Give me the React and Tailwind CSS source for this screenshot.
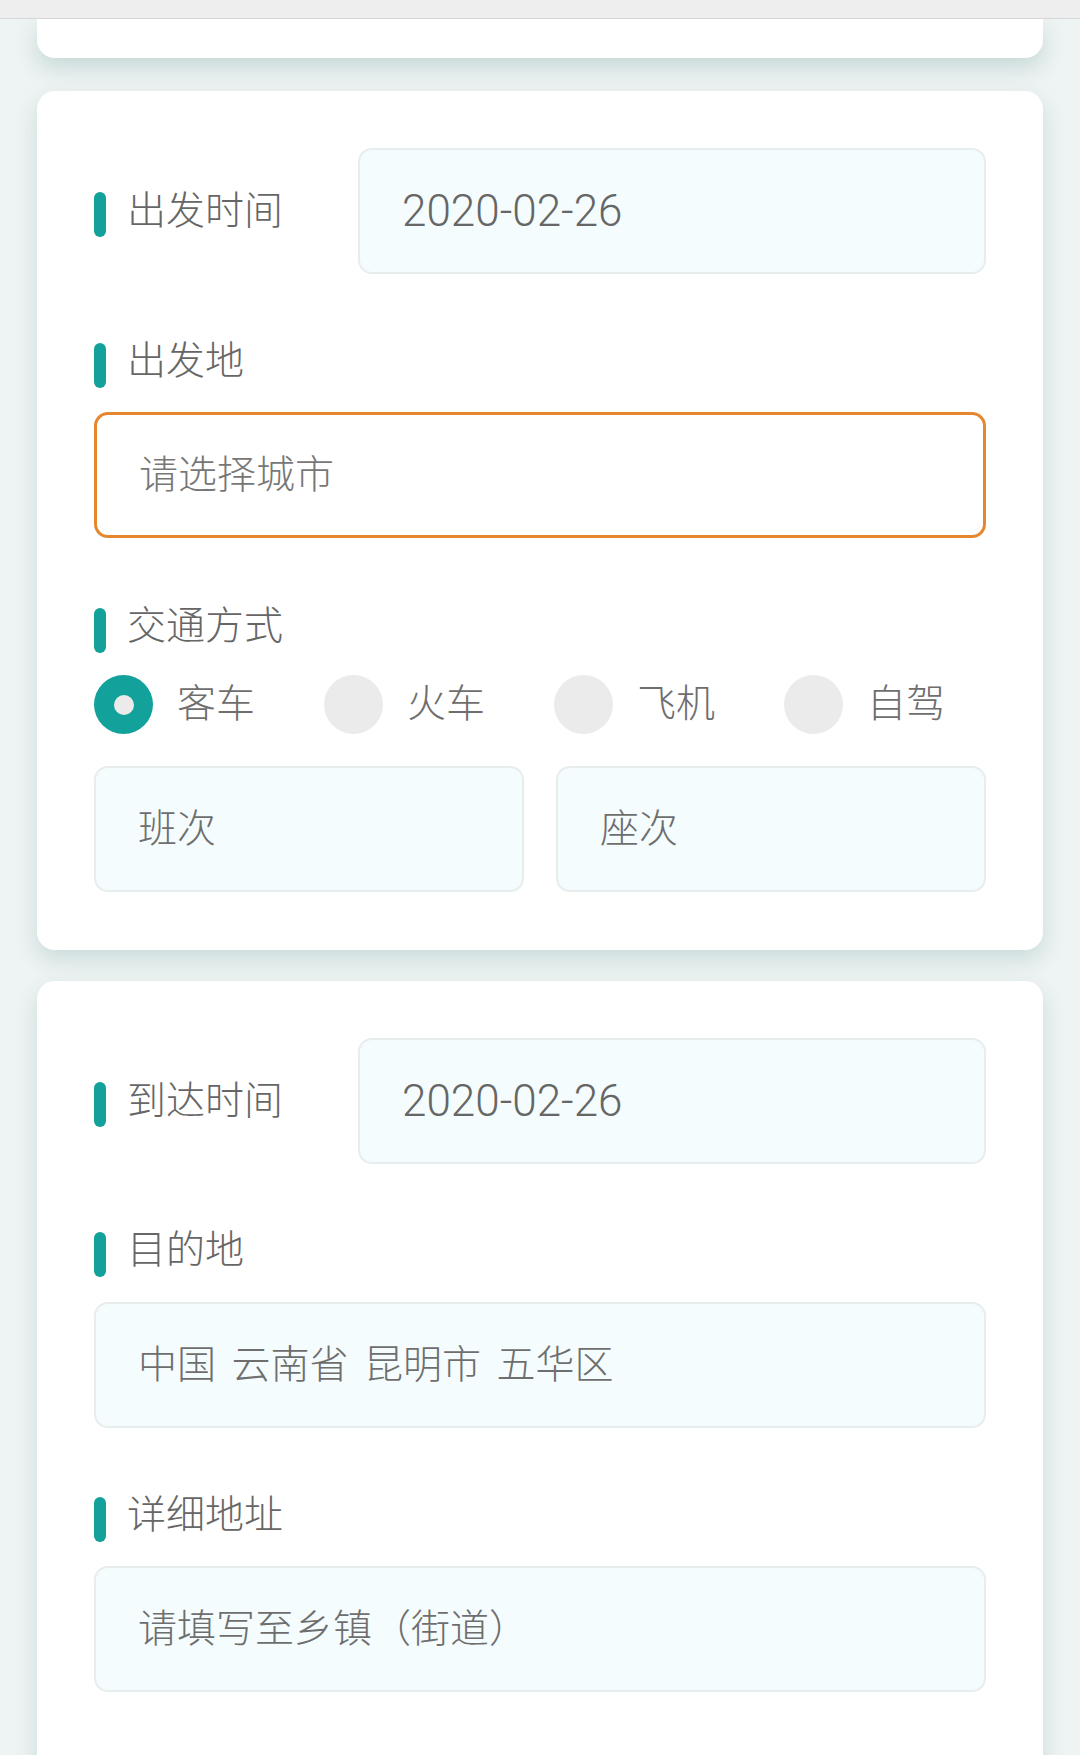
import React, { useState } from 'react';

const FONT = { fontFamily: "Roboto, 'Noto Sans CJK SC', sans-serif" };

const Label = ({ children }) => (
  <div className="flex items-center h-[47px]">
    <span className="block w-[12px] h-[45px] mt-[7px] rounded-full bg-[#13a19b]" />
    <span className="ml-[21px] text-[39px] font-light leading-none text-[#666666]">{children}</span>
  </div>
);

const Field = ({ children, active, className = '' }) => (
  <div
    className={`flex items-center h-[126px] px-[42px] rounded-[14px] text-[39px] font-light leading-none ${
      active
        ? 'bg-white border-[3px] border-[#e6862f] text-[#777777]'
        : 'bg-[#f4fcfd] border-2 border-[#e7eded] text-[#6e6e6e]'
    } ${className}`}
  >
    {children}
  </div>
);

const DateField = ({ value }) => (
  <Field className="flex-1">
    <span className="text-[44px] font-light text-[#666666]">{value}</span>
  </Field>
);

const Card = ({ children }) => (
  <div className="bg-white rounded-[18px] shadow-[0_10px_22px_rgba(30,110,100,0.17)] px-[57px] pt-[57px] pb-[58px]">
    {children}
  </div>
);

const modes = ['客车', '火车', '飞机', '自驾'];

export default function App() {
  const [mode, setMode] = useState(0);

  return (
    <div className="w-full h-[1755px] overflow-hidden bg-[#eef3f3]" style={FONT}>
      {/* top bar */}
      <div className="relative z-10 h-[19px] bg-[#eeeeee] border-b border-[#d6d6d6]" />

      <div className="px-[37px]">
        {/* previous card, cut off */}
        <div className="h-[39px] bg-white rounded-b-[18px] shadow-[0_10px_22px_rgba(30,110,100,0.19)]" />

        {/* departure */}
        <div className="mt-[33px]">
          <Card>
            <div className="flex items-center">
              <div className="w-[264px]">
                <Label>出发时间</Label>
              </div>
              <DateField value="2020-02-26" />
            </div>

            <div className="mt-[64px]">
              <Label>出发地</Label>
            </div>
            <Field active className="mt-[27px]">请选择城市</Field>

            <div className="mt-[65px]">
              <Label>交通方式</Label>
            </div>
            <div className="mt-[25px] flex items-center">
              {modes.map((m, i) => (
                <button
                  key={m}
                  onClick={() => setMode(i)}
                  className={`flex items-center ${i < 3 ? 'w-[230px]' : ''}`}
                >
                  {mode === i ? (
                    <span className="flex items-center justify-center w-[59px] h-[59px] rounded-full bg-[#13a19b]">
                      <span className="w-[20px] h-[20px] rounded-full bg-[#ebebeb]" />
                    </span>
                  ) : (
                    <span className="w-[59px] h-[59px] rounded-full bg-[#ebebeb]" />
                  )}
                  <span className="ml-[24px] text-[39px] font-light leading-none text-[#6e6e6e]">{m}</span>
                </button>
              ))}
            </div>

            <div className="mt-[32px] grid grid-cols-2 gap-[32px]">
              <Field>班次</Field>
              <Field>座次</Field>
            </div>
          </Card>
        </div>

        {/* arrival */}
        <div className="mt-[31px]">
          <Card>
            <div className="flex items-center">
              <div className="w-[264px]">
                <Label>到达时间</Label>
              </div>
              <DateField value="2020-02-26" />
            </div>

            <div className="mt-[63px]">
              <Label>目的地</Label>
            </div>
            <Field className="mt-[28px] [word-spacing:6px]">中国 云南省 昆明市 五华区</Field>

            <div className="mt-[64px]">
              <Label>详细地址</Label>
            </div>
            <Field className="mt-[27px]">请填写至乡镇（街道）</Field>

            <div className="h-[200px]" />
          </Card>
        </div>
      </div>
    </div>
  );
}
